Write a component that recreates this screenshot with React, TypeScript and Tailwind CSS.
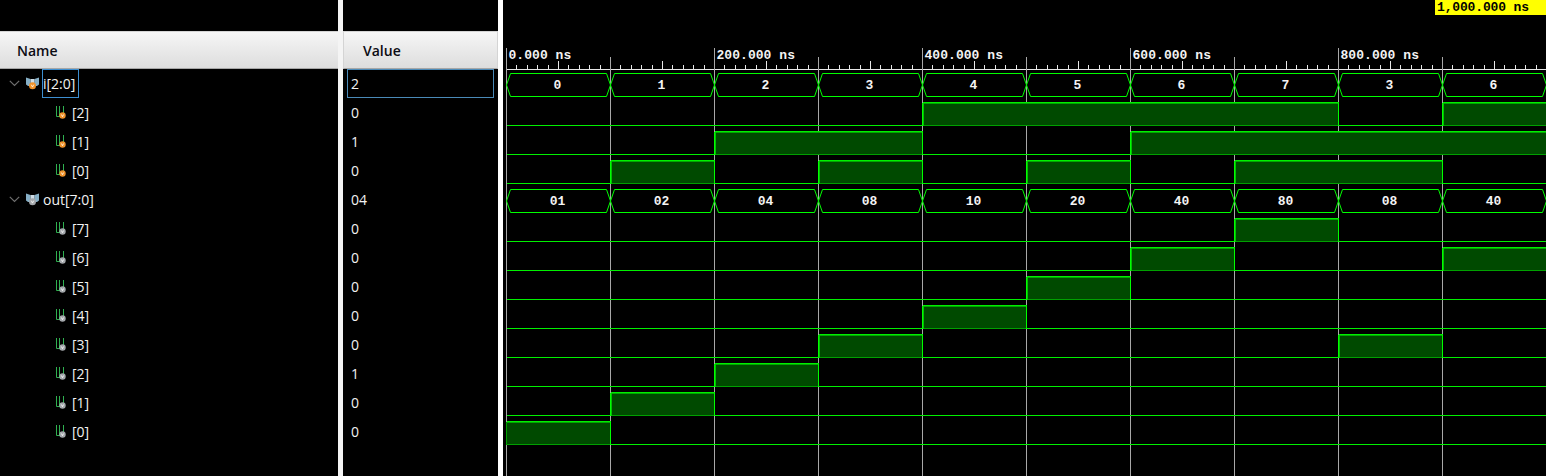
import React from 'react'

const ROW_H = 29
const CELL = 104
const X0 = 506.5
const END = 1546

type Row =
  | { name: string; value: string; kind: 'bus'; color: string; labels: string[] }
  | { name: string; value: string; kind: 'bit'; color: string; bits: number[] }

const ORANGE = '#f0922a'
const GRAY = '#a4a8ac'

const rows: Row[] = [
  { name: 'i[2:0]', value: '2', kind: 'bus', color: ORANGE, labels: ['0', '1', '2', '3', '4', '5', '6', '7', '3', '6'] },
  { name: '[2]', value: '0', kind: 'bit', color: ORANGE, bits: [0, 0, 0, 0, 1, 1, 1, 1, 0, 1] },
  { name: '[1]', value: '1', kind: 'bit', color: ORANGE, bits: [0, 0, 1, 1, 0, 0, 1, 1, 1, 1] },
  { name: '[0]', value: '0', kind: 'bit', color: ORANGE, bits: [0, 1, 0, 1, 0, 1, 0, 1, 1, 0] },
  { name: 'out[7:0]', value: '04', kind: 'bus', color: GRAY, labels: ['01', '02', '04', '08', '10', '20', '40', '80', '08', '40'] },
  { name: '[7]', value: '0', kind: 'bit', color: GRAY, bits: [0, 0, 0, 0, 0, 0, 0, 1, 0, 0] },
  { name: '[6]', value: '0', kind: 'bit', color: GRAY, bits: [0, 0, 0, 0, 0, 0, 1, 0, 0, 1] },
  { name: '[5]', value: '0', kind: 'bit', color: GRAY, bits: [0, 0, 0, 0, 0, 1, 0, 0, 0, 0] },
  { name: '[4]', value: '0', kind: 'bit', color: GRAY, bits: [0, 0, 0, 0, 1, 0, 0, 0, 0, 0] },
  { name: '[3]', value: '0', kind: 'bit', color: GRAY, bits: [0, 0, 0, 1, 0, 0, 0, 0, 1, 0] },
  { name: '[2]', value: '1', kind: 'bit', color: GRAY, bits: [0, 0, 1, 0, 0, 0, 0, 0, 0, 0] },
  { name: '[1]', value: '0', kind: 'bit', color: GRAY, bits: [0, 1, 0, 0, 0, 0, 0, 0, 0, 0] },
  { name: '[0]', value: '0', kind: 'bit', color: GRAY, bits: [1, 0, 0, 0, 0, 0, 0, 0, 0, 0] },
]

function BusIcon({ color }: { color: string }) {
  return (
    <svg width="13" height="13" viewBox="0 0 13 13" className="shrink-0">
      <path d="M0 0.5 L4.5 2 L4.5 9 L2 9 L0 7.5 Z" fill="#86afc6" />
      <path d="M13 0.5 L8.5 2 L8.5 9 L11 9 L13 7.5 Z" fill="#86afc6" />
      <path d="M4.5 2 L8.5 2 L8.5 6 L4.5 6 Z" fill="#cfdde6" />
      <circle cx="6.5" cy="8.8" r="3.5" fill={color} />
      <path d="M5.3 7.7 L6.5 10.1 L7.7 7.7" fill="none" stroke="#fff" strokeWidth="0.8" />
    </svg>
  )
}

function BitIcon({ color }: { color: string }) {
  return (
    <svg width="10" height="13" viewBox="0 0 10 13" className="shrink-0">
      <path d="M0.5 0 V10.5 H4" fill="none" stroke="#2fb050" strokeWidth="1" />
      <path d="M3.5 0 V10" fill="none" stroke="#2fb050" strokeWidth="1" />
      <path d="M7.5 0 V7" fill="none" stroke="#2fb050" strokeWidth="1" />
      <circle cx="6.5" cy="9.5" r="3.2" fill={color} />
      <path d="M5.4 8.5 L6.5 10.7 L7.6 8.5" fill="none" stroke="#fff" strokeWidth="0.8" />
    </svg>
  )
}

function Chevron() {
  return (
    <svg width="11" height="7" viewBox="0 0 11 7" className="shrink-0">
      <path d="M0.8 0.8 L5.5 5.5 L10.2 0.8" fill="none" stroke="#6f6f6f" strokeWidth="1.2" />
    </svg>
  )
}

function Header({ label, pad }: { label: string; pad: string }) {
  return (
    <div className={`h-[38px] flex items-center bg-gradient-to-b from-[#f6f6f6] to-[#dddddd] border-t border-t-[#d4d4d4] border-b border-b-[#a6a6a6] font-semibold text-[14px] text-[#0c0c14] ${pad}`}>
      {label}
    </div>
  )
}

function Wave() {
  const xs = Array.from({ length: 11 }, (_, k) => X0 + k * CELL)
  const ticks = Array.from({ length: 101 }, (_, k) => k)

  return (
    <svg width="1043" height="476" viewBox="503 0 1043 476" className="block" shapeRendering="crispEdges">
      {/* time cursor tag */}
      <rect x="1435" y="0" width="111" height="15" fill="#ffff00" />
      <text x="1437" y="11" fontFamily="'Liberation Mono', monospace" fontWeight="700" fontSize="13" letterSpacing="-0.15" fill="#000" shapeRendering="auto">
        1,000.000 ns
      </text>

      {/* ruler */}
      <line x1={X0} x2={END} y1="69.5" y2="69.5" stroke="#e8e8e8" />
      {ticks.map(k => {
        const x = Math.round(X0 + k * 10.4 - 0.5) + 0.5
        return <line key={k} x1={x} x2={x} y1={k % 5 === 0 ? 61 : 65} y2="69" stroke="#e8e8e8" />
      })}
      {['0.000 ns', '200.000 ns', '400.000 ns', '600.000 ns', '800.000 ns'].map((t, k) => (
        <text key={t} x={X0 + k * 208 + 2} y="59" fontFamily="'Liberation Mono', monospace" fontWeight="700" fontSize="13" letterSpacing="0.05" fill="#f4f4f4" shapeRendering="auto">
          {t}
        </text>
      ))}

      {/* grid */}
      {xs.map((x, k) => (
        <line key={k} x1={x} x2={x} y1={k % 2 === 0 ? 48 : 57} y2="476" stroke="#a8a8a8" />
      ))}

      {rows.map((row, r) => {
        const top = 69 + r * ROW_H
        if (row.kind === 'bus') {
          return (
            <g key={r}>
              {row.labels.map((label, k) => {
                const a = xs[k]
                const b = a + CELL
                const y1 = top + 4.5
                const y2 = top + 27.5
                const mid = top + 16
                return (
                  <g key={k}>
                    <path
                      d={`M${a} ${mid} L${a + 4} ${y1} H${b - 4} L${b} ${mid} L${b - 4} ${y2} H${a + 4} Z`}
                      fill="none"
                      stroke="#00ff00"
                      shapeRendering="auto"
                    />
                    <text x={a + 51} y={top + 20} textAnchor="middle" fontFamily="'Liberation Mono', monospace" fontWeight="700" fontSize="13" fill="#f4f4f4" shapeRendering="auto">
                      {label}
                    </text>
                  </g>
                )
              })}
            </g>
          )
        }
        const high = top + 4.5
        const low = top + 27.5
        return (
          <g key={r}>
            {row.bits.map((bit, k) => {
              const a = xs[k]
              const b = Math.min(a + CELL, END)
              const prev = k > 0 ? row.bits[k - 1] : 0
              return (
                <g key={k}>
                  {bit === 1 && <rect x={a} y={high} width={b - a} height={low - high} fill="#004a00" />}
                  <line x1={a} x2={b} y1={bit ? high : low} y2={bit ? high : low} stroke="#00f000" />
                  {bit === 1 && <line x1={a} x2={b} y1={high + 1} y2={high + 1} stroke="#00a800" />}
                  {bit === 1 && <line x1={a} x2={b} y1={low} y2={low} stroke="#00a000" />}
                  {k > 0 && prev !== bit && <line x1={a} x2={a} y1={high} y2={low} stroke="#00ff00" />}
                  {k > 0 && prev === 0 && bit === 1 && <line x1={a + 1} x2={a + 1} y1={high} y2={low} stroke="#00c000" />}
                  {k === 0 && bit === 1 && <line x1={a} x2={a} y1={high} y2={low} stroke="#00a000" />}
                </g>
              )
            })}
          </g>
        )
      })}
    </svg>
  )
}

export default function App() {
  return (
    <div className="w-[1546px] h-[476px] overflow-hidden bg-black flex text-[14px] text-[#f2f2f2] font-['Open_Sans','Noto_Sans',sans-serif]">
      {/* name column */}
      <div className="w-[338px] pt-[31px] shrink-0">
        <Header label="Name" pad="pl-[17px]" />
        {rows.map((row, i) => (
          <div key={i} className="h-[29px] flex items-center">
            {row.kind === 'bus' ? (
              <div className="flex items-center pl-[9px]">
                <Chevron />
                <span className="ml-[6px]"><BusIcon color={row.color} /></span>
                <span className={`ml-[3px] h-[29px] flex items-center pr-[3px] border ${i === 0 ? 'border-[#3d8fd1]' : 'border-transparent'}`}>
                  {row.name}
                </span>
              </div>
            ) : (
              <div className="flex items-center pl-[56px]">
                <BitIcon color={row.color} />
                <span className="ml-[6px]">{row.name}</span>
              </div>
            )}
          </div>
        ))}
      </div>
      <div className="w-[5px] bg-[#f4f4f4] shrink-0" />

      {/* value column */}
      <div className="w-[155px] pt-[31px] shrink-0">
        <Header label="Value" pad="pl-[19px] border-x border-x-[#d4d4d4]" />
        {rows.map((row, i) => (
          <div key={i} className="h-[29px] flex items-center pl-[4px] pr-[4px]">
            <div className={`w-full h-full flex items-center pl-[3px] border ${i === 0 ? 'border-[#4a8ab8]' : 'border-transparent'}`}>
              {row.value}
            </div>
          </div>
        ))}
      </div>
      <div className="w-[5px] bg-white shrink-0" />

      <Wave />
    </div>
  )
}
